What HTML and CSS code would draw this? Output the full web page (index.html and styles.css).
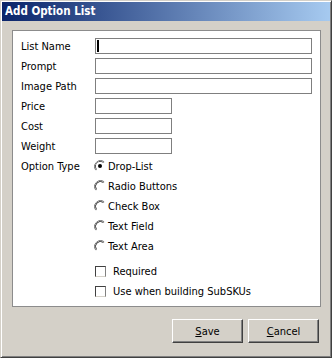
FILE: index.html
```html
<!DOCTYPE html>
<html>
<head>
<meta charset="utf-8">
<link rel="stylesheet" href="styles.css">
</head>
<body>
<div class="window">
  <div class="titlebar">Add Option List</div>
  <div class="panel">
    <div class="row"><span class="label">List Name</span><div class="field long"><span class="caret"></span></div></div>
    <div class="row"><span class="label">Prompt</span><div class="field long"></div></div>
    <div class="row"><span class="label">Image Path</span><div class="field long"></div></div>
    <div class="row"><span class="label">Price</span><div class="field short"></div></div>
    <div class="row"><span class="label">Cost</span><div class="field short"></div></div>
    <div class="row"><span class="label">Weight</span><div class="field short"></div></div>
    <div class="row"><span class="label">Option Type</span>
      <span class="radio"><svg width="12" height="12" viewBox="0 0 12 12"><path d="M10.2 1.8A6 6 0 0 0 1.8 10.2" fill="none" stroke="#808080" stroke-width="1"/><path d="M9.5 2.5A5 5 0 0 0 2.5 9.5" fill="none" stroke="#404040" stroke-width="1"/><circle cx="6" cy="6" r="4" fill="#fff"/><circle cx="6" cy="6" r="2" fill="#000"/></svg></span><span class="opt">Drop-List</span></div>
    <div class="row"><span class="label"></span>
      <span class="radio"><svg width="12" height="12" viewBox="0 0 12 12"><path d="M10.2 1.8A6 6 0 0 0 1.8 10.2" fill="none" stroke="#808080" stroke-width="1"/><path d="M9.5 2.5A5 5 0 0 0 2.5 9.5" fill="none" stroke="#404040" stroke-width="1"/></svg></span><span class="opt">Radio Buttons</span></div>
    <div class="row"><span class="label"></span>
      <span class="radio"><svg width="12" height="12" viewBox="0 0 12 12"><path d="M10.2 1.8A6 6 0 0 0 1.8 10.2" fill="none" stroke="#808080" stroke-width="1"/><path d="M9.5 2.5A5 5 0 0 0 2.5 9.5" fill="none" stroke="#404040" stroke-width="1"/></svg></span><span class="opt">Check Box</span></div>
    <div class="row"><span class="label"></span>
      <span class="radio"><svg width="12" height="12" viewBox="0 0 12 12"><path d="M10.2 1.8A6 6 0 0 0 1.8 10.2" fill="none" stroke="#808080" stroke-width="1"/><path d="M9.5 2.5A5 5 0 0 0 2.5 9.5" fill="none" stroke="#404040" stroke-width="1"/></svg></span><span class="opt">Text Field</span></div>
    <div class="row"><span class="label"></span>
      <span class="radio"><svg width="12" height="12" viewBox="0 0 12 12"><path d="M10.2 1.8A6 6 0 0 0 1.8 10.2" fill="none" stroke="#808080" stroke-width="1"/><path d="M9.5 2.5A5 5 0 0 0 2.5 9.5" fill="none" stroke="#404040" stroke-width="1"/></svg></span><span class="opt">Text Area</span></div>
    <div class="row check first"><span class="label"></span><span class="box"></span><span class="copt">Required</span></div>
    <div class="row check"><span class="label"></span><span class="box"></span><span class="copt">Use when building SubSKUs</span></div>
  </div>
  <div class="buttons">
    <div class="btn"><span class="ul">S</span>ave</div>
    <div class="btn"><span class="ul">C</span>ancel</div>
  </div>
</div>
</body>
</html>
```
FILE: styles.css
```css
* { box-sizing: border-box; }
html, body { margin: 0; padding: 0; }
body {
  width: 332px;
  height: 358px;
  font-family: "DejaVu Sans Condensed", "DejaVu Sans", sans-serif;
  font-size: 11px;
  color: #000;
}
.window {
  width: 332px;
  height: 358px;
  background: #d4d0c8;
  border-top: 1px solid #d4d0c8;
  border-left: 1px solid #d4d0c8;
  border-right: 1px solid #404040;
  border-bottom: 1px solid #404040;
  box-shadow: inset 1px 1px 0 #fff, inset -1px -1px 0 #808080;
  padding: 1px 1px 1px 1px;
  display: flex;
  flex-direction: column;
}
.titlebar {
  height: 19px;
  background: linear-gradient(to right, #0a246a, #a6caf0);
  color: #fff;
  font-weight: bold;
  font-size: 11.5px;
  line-height: 19px;
  padding-left: 3px;
}
.panel {
  margin: 9px 9px 0 10px;
  height: 277px;
  background: #fff;
  border: 1px solid #8c8c8c;
  padding: 7px 8px 0 8px;
  display: flex;
  flex-direction: column;
  gap: 4px;
}
.row {
  display: flex;
  align-items: center;
  height: 16px;
}
.label {
  width: 74px;
  flex: none;
}
.field {
  height: 16px;
  border: 1px solid #7f7f7f;
  background: #fff;
  display: flex;
  align-items: center;
  padding-left: 1px;
}
.field.long { width: 217px; }
.field.short { width: 77px; }
.caret {
  width: 2px;
  height: 12px;
  background: #000;
}
.radio {
  width: 12px;
  height: 12px;
  margin-left: -1px;
  display: flex;
}
.opt { margin-left: 2px; }
.row.check.first { margin-top: 5px; }
.box {
  width: 11px;
  height: 11px;
  border-top: 1px solid #404040;
  border-left: 1px solid #404040;
  border-right: 1px solid #808080;
  border-bottom: 1px solid #d4d0c8;
}
.copt { margin-left: 7px; }
.buttons {
  display: flex;
  justify-content: flex-end;
  gap: 5px;
  margin: 12px 11px 0 0;
}
.btn {
  width: 71px;
  height: 24px;
  border-top: 1px solid #fff;
  border-left: 1px solid #fff;
  border-right: 1px solid #404040;
  border-bottom: 1px solid #404040;
  box-shadow: inset -1px -1px 0 #808080;
  display: flex;
  align-items: center;
  justify-content: center;
}
.ul { text-decoration: underline; }
```
